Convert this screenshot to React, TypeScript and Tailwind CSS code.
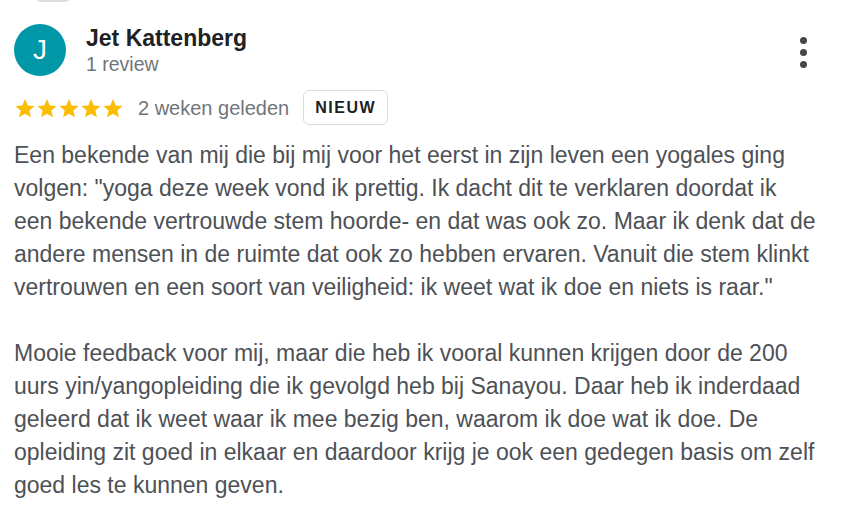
import React from "react";

function Star() {
  return (
    <svg width="22" height="22" viewBox="0 0 24 24" className="block">
      <path
        fill="#fbbc04"
        d="M12 2.2l2.94 6.96 7.53.65-5.71 4.95 1.71 7.36L12 18.2l-6.47 3.92 1.71-7.36-5.71-4.95 7.53-.65z"
      />
    </svg>
  );
}

export default function App() {
  return (
    <div className="relative w-[846px] h-[526px] bg-white overflow-hidden font-['Liberation_Sans',Arial,sans-serif]">
      <div className="absolute left-[36px] top-[-8px] w-[34px] h-[10px] rounded-full bg-[#dadce0]" />
      <div className="pt-[24px] pl-[14px] pr-[4px]">
        <div className="flex items-start">
          <div className="w-[52px] h-[52px] rounded-full bg-[#0097a7] flex items-center justify-center text-white text-[28px] leading-none">
            J
          </div>
          <div className="ml-[20px] flex flex-col">
            <div className="text-[23px] leading-[28px] font-bold text-[#202124]">
              Jet Kattenberg
            </div>
            <div className="text-[19.5px] leading-[24px] text-[#70757a]">1 review</div>
          </div>
          <div className="ml-auto mr-[35px] mt-[13px] flex flex-col gap-[5px]">
            <span className="block w-[7px] h-[7px] rounded-full bg-[#444746]" />
            <span className="block w-[7px] h-[7px] rounded-full bg-[#444746]" />
            <span className="block w-[7px] h-[7px] rounded-full bg-[#444746]" />
          </div>
        </div>
        <div className="flex items-center mt-[14px]">
          <div className="flex">
            <Star />
            <Star />
            <Star />
            <Star />
            <Star />
          </div>
          <span className="ml-[14px] text-[20px] text-[#70757a]">2 weken geleden</span>
          <span className="ml-[14px] h-[35px] px-[11px] flex items-center border border-[#dadce0] rounded-[6px] text-[16px] font-bold tracking-[1.5px] text-[#202124]">
            NIEUW
          </span>
        </div>
        <div className="mt-[14px] text-[23px] leading-[33px] text-[#4d5156] whitespace-nowrap">
          Een bekende van mij die bij mij voor het eerst in zijn leven een yogales ging
          <br />
          volgen: "yoga deze week vond ik prettig. Ik dacht dit te verklaren doordat ik
          <br />
          een bekende vertrouwde stem hoorde- en dat was ook zo. Maar ik denk dat de
          <br />
          andere mensen in de ruimte dat ook zo hebben ervaren. Vanuit die stem klinkt
          <br />
          vertrouwen en een soort van veiligheid: ik weet wat ik doe en niets is raar."
          <br />
          <br />
          Mooie feedback voor mij, maar die heb ik vooral kunnen krijgen door de 200
          <br />
          uurs yin/yangopleiding die ik gevolgd heb bij Sanayou. Daar heb ik inderdaad
          <br />
          geleerd dat ik weet waar ik mee bezig ben, waarom ik doe wat ik doe. De
          <br />
          opleiding zit goed in elkaar en daardoor krijg je ook een gedegen basis om zelf
          <br />
          goed les te kunnen geven.
        </div>
      </div>
    </div>
  );
}
